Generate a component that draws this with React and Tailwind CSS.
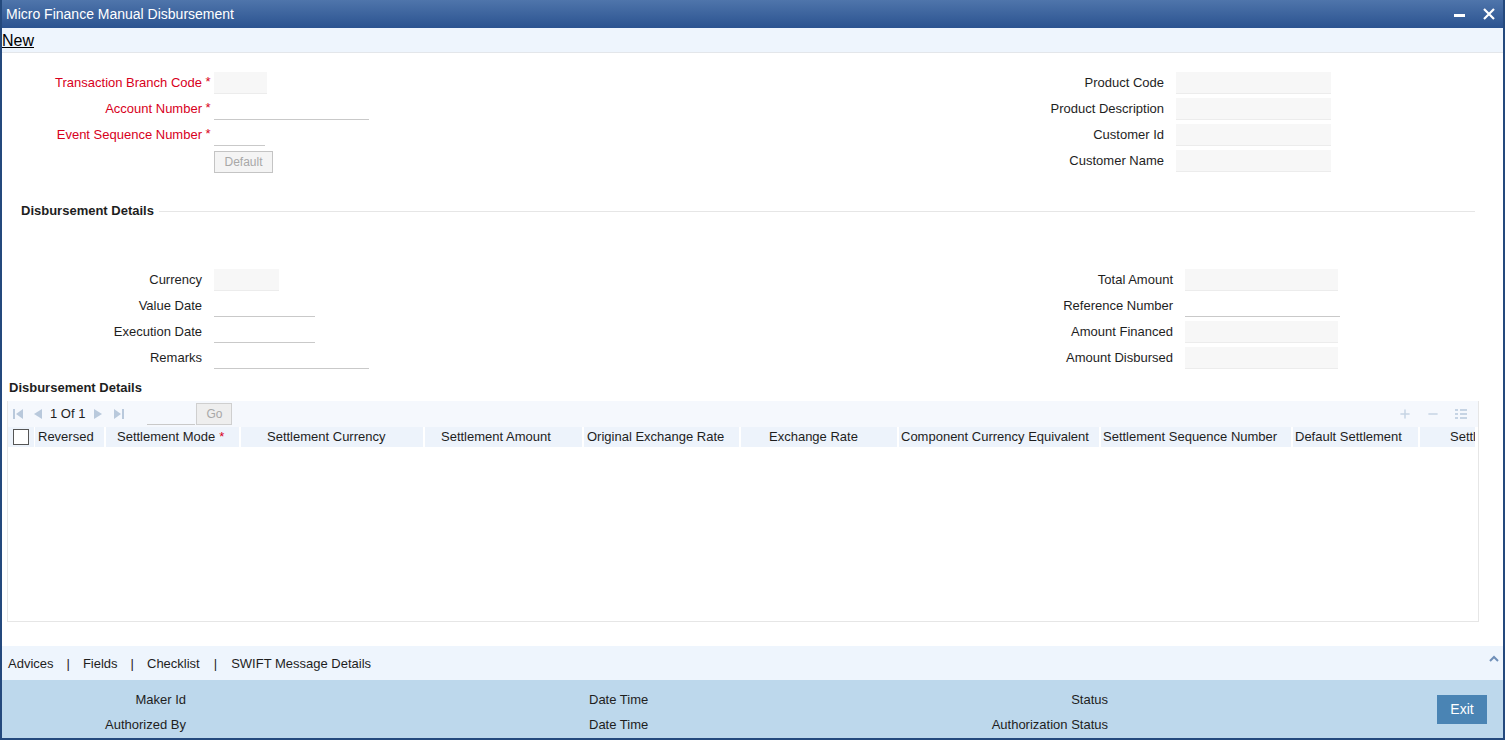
import { Plus, Minus } from 'lucide-react';

const red = 'text-[#d8001c]';

function Field({ label, required, input, labelW, gapW = 12 }) {
    return (
        <div className="flex items-center h-[26px]">
            <span className={'text-right whitespace-nowrap ' + (required ? red : 'text-[#1e1e1e]')} style={{ width: labelW }}>
                {label}
            </span>
            <span className={'text-center self-start pt-[2px] ' + red} style={{ width: gapW }}>
                {required ? '*' : ''}
            </span>
            {input}
        </div>
    );
}

const Gray = ({ w }) => <div className="h-[22px] bg-[#f7f7f7] border-b border-[#ececec]" style={{ width: w }} />;
const Line = ({ w }) => <div className="h-[22px] border-b border-[#c9c9c9]" style={{ width: w }} />;

const columns = [
    { label: 'Reversed', w: 71, pl: 3 },
    { label: 'Settlement Mode', w: 135, pl: 11, req: true },
    { label: 'Settlement Currency', w: 184, pl: 26 },
    { label: 'Settlement Amount', w: 159, pl: 16 },
    { label: 'Original Exchange Rate', w: 157, pl: 3 },
    { label: 'Exchange Rate', w: 158, pl: 28 },
    { label: 'Component Currency Equivalent', w: 202, pl: 2 },
    { label: 'Settlement Sequence Number', w: 192, pl: 2 },
    { label: 'Default Settlement', w: 127, pl: 2 },
    { label: 'Settl', w: 57, pl: 30 },
];

function Tri({ dir }) {
    return (
        <svg width="10" height="12" viewBox="0 0 10 12">
            {dir === 'l' ? <path d="M9 1 L1 6 L9 11 Z" fill="#b9c9dc" /> : <path d="M1 1 L9 6 L1 11 Z" fill="#b9c9dc" />}
        </svg>
    );
}

export default function App() {
    return (
        <div
            className="w-[1505px] h-[740px] flex flex-col border-x-2 border-b-2 border-[#24497d] bg-white text-[13px] text-[#1e1e1e] overflow-hidden"
            style={{ fontFamily: '"Liberation Sans", Arial, sans-serif' }}
        >
            {/* title bar */}
            <div className="h-[28px] shrink-0 flex items-center justify-between pl-[4px] pr-[8px] bg-gradient-to-b from-[#4f75ab] to-[#2b5390] text-white">
                <span className="text-[14px]">Micro Finance Manual Disbursement</span>
                <div className="flex items-center gap-[18px]">
                    <div className="w-[11px] h-[3px] bg-white mt-[3px]" />
                    <svg width="12" height="12" viewBox="0 0 12 12">
                        <path d="M1 1 L11 11 M11 1 L1 11" stroke="white" strokeWidth="2.2" />
                    </svg>
                </div>
            </div>

            {/* toolbar */}
            <div className="h-[25px] shrink-0 flex items-center pt-[2px] bg-[#eef5fd] border-b border-[#e3e6ea]">
                <span className="text-[16px] underline text-black">New</span>
            </div>

            {/* header fields */}
            <div className="flex pt-[17px]">
                <div className="w-[900px] flex flex-col">
                    <Field label="Transaction Branch Code" required labelW={200} input={<Gray w={53} />} />
                    <Field label="Account Number" required labelW={200} input={<Line w={155} />} />
                    <Field label="Event Sequence Number" required labelW={200} input={<Line w={51} />} />
                    <div className="flex items-center h-[26px] pl-[212px]">
                        <button className="w-[59px] h-[22px] mt-[2px] border border-[#c4c4c4] bg-[#f4f4f4] text-[#a8a8a8] text-[12px]">
                            Default
                        </button>
                    </div>
                </div>
                <div className="flex flex-col">
                    <Field label="Product Code" labelW={262} input={<Gray w={155} />} />
                    <Field label="Product Description" labelW={262} input={<Gray w={155} />} />
                    <Field label="Customer Id" labelW={262} input={<Gray w={155} />} />
                    <Field label="Customer Name" labelW={262} input={<Gray w={155} />} />
                </div>
            </div>

            {/* section header */}
            <div className="flex items-center mt-[29px] ml-[19px] mr-[28px] h-[16px]">
                <span className="font-bold text-[13px] whitespace-nowrap">Disbursement Details</span>
                <div className="flex-1 h-px bg-[#e6e6e6] ml-[5px]" />
            </div>

            {/* disbursement fields */}
            <div className="flex mt-[48px]">
                <div className="w-[900px] flex flex-col">
                    <Field label="Currency" labelW={200} input={<Gray w={65} />} />
                    <Field label="Value Date" labelW={200} input={<Line w={101} />} />
                    <Field label="Execution Date" labelW={200} input={<Line w={101} />} />
                    <Field label="Remarks" labelW={200} input={<Line w={155} />} />
                </div>
                <div className="flex flex-col">
                    <Field label="Total Amount" labelW={271} input={<Gray w={153} />} />
                    <Field label="Reference Number" labelW={271} input={<Line w={155} />} />
                    <Field label="Amount Financed" labelW={271} input={<Gray w={153} />} />
                    <Field label="Amount Disbursed" labelW={271} input={<Gray w={153} />} />
                </div>
            </div>

            <div className="mt-[7px] ml-[7px] h-[16px] font-bold">Disbursement Details</div>

            {/* grid */}
            <div className="ml-[5px] mt-[7px] w-[1472px] h-[221px] border border-[#e6e6e6] border-t-0 flex flex-col overflow-hidden">
                <div className="h-[26px] bg-[#f5f8fd] flex items-center pl-[4px]">
                    <svg width="12" height="12" viewBox="0 0 12 12" className="mr-[9px]">
                        <rect x="1" y="1" width="2" height="10" fill="#b9c9dc" />
                        <path d="M11 1 L4 6 L11 11 Z" fill="#b9c9dc" />
                    </svg>
                    <Tri dir="l" />
                    <span className="ml-[7px]">1 Of 1</span>
                    <span className="ml-[8px]"><Tri dir="r" /></span>
                    <svg width="12" height="12" viewBox="0 0 12 12" className="ml-[10px]">
                        <path d="M1 1 L8 6 L1 11 Z" fill="#b9c9dc" />
                        <rect x="9" y="1" width="2" height="10" fill="#b9c9dc" />
                    </svg>
                    <div className="ml-[22px] w-[48px] h-[22px] border-b border-[#c9c9c9]" />
                    <button className="ml-[1px] w-[36px] h-[22px] border border-[#cfcfcf] bg-[#eeeeee] text-[#a8a8a8] text-[12px]">
                        Go
                    </button>
                    <div className="ml-auto flex items-center gap-[14px] pr-[10px] text-[#c6d4e4]">
                        <Plus size={14} strokeWidth={2.5} />
                        <Minus size={14} strokeWidth={2.5} />
                        <svg width="14" height="14" viewBox="0 0 14 14">
                            <g fill="#c6d4e4">
                                <rect x="1" y="2" width="3" height="2" />
                                <rect x="6" y="2" width="7" height="2" />
                                <rect x="1" y="6" width="3" height="2" />
                                <rect x="6" y="6" width="7" height="2" />
                                <rect x="1" y="10" width="3" height="2" />
                                <rect x="6" y="10" width="7" height="2" />
                            </g>
                        </svg>
                    </div>
                </div>
                <div className="h-[20px] flex bg-white">
                    <div className="w-[27px] shrink-0 bg-[#edf3fb] border-r border-white flex items-center pl-[5px]">
                        <div className="w-[16px] h-[16px] border border-[#555] bg-white" />
                    </div>
                    {columns.map((c) => (
                        <div
                            key={c.label}
                            className="shrink-0 bg-[#edf3fb] border-r-2 border-white flex items-center whitespace-nowrap overflow-hidden"
                            style={{ width: c.w, paddingLeft: c.pl }}
                        >
                            {c.label}
                            {c.req && <span className={'ml-[4px] ' + red}>*</span>}
                        </div>
                    ))}
                </div>
            </div>

            {/* tabs */}
            <div className="mt-[24px] h-[34px] bg-[#eef5fd] flex items-center pt-[2px] pl-[6px] pr-[4px]">
                <span>Advices</span>
                <span className="mx-[13px]">|</span>
                <span>Fields</span>
                <span className="mx-[13px]">|</span>
                <span>Checklist</span>
                <span className="mx-[14px]">|</span>
                <span>SWIFT Message Details</span>
                <svg width="10" height="7" viewBox="0 0 10 7" className="ml-auto mb-[12px]">
                    <path d="M1 6 L5 2 L9 6" stroke="#6f8fb8" strokeWidth="2" fill="none" />
                </svg>
            </div>

            {/* footer */}
            <div className="flex-1 bg-[#bdd8ec] flex items-center">
                <div className="flex-1 flex flex-col self-start pt-[7px]">
                    {[
                        ['Maker Id', 'Date Time', 'Status'],
                        ['Authorized By', 'Date Time', 'Authorization Status'],
                    ].map((r) => (
                        <div key={r[0]} className="h-[25px] flex items-center">
                            <span className="w-[184px] text-right">{r[0]}</span>
                            <span className="ml-[403px] w-[200px]">{r[1]}</span>
                            <span className="w-[319px] text-right">{r[2]}</span>
                        </div>
                    ))}
                </div>
                <button className="mr-[16px] w-[50px] h-[29px] bg-[#4a84b4] text-white text-[14px]">Exit</button>
            </div>
        </div>
    );
}
